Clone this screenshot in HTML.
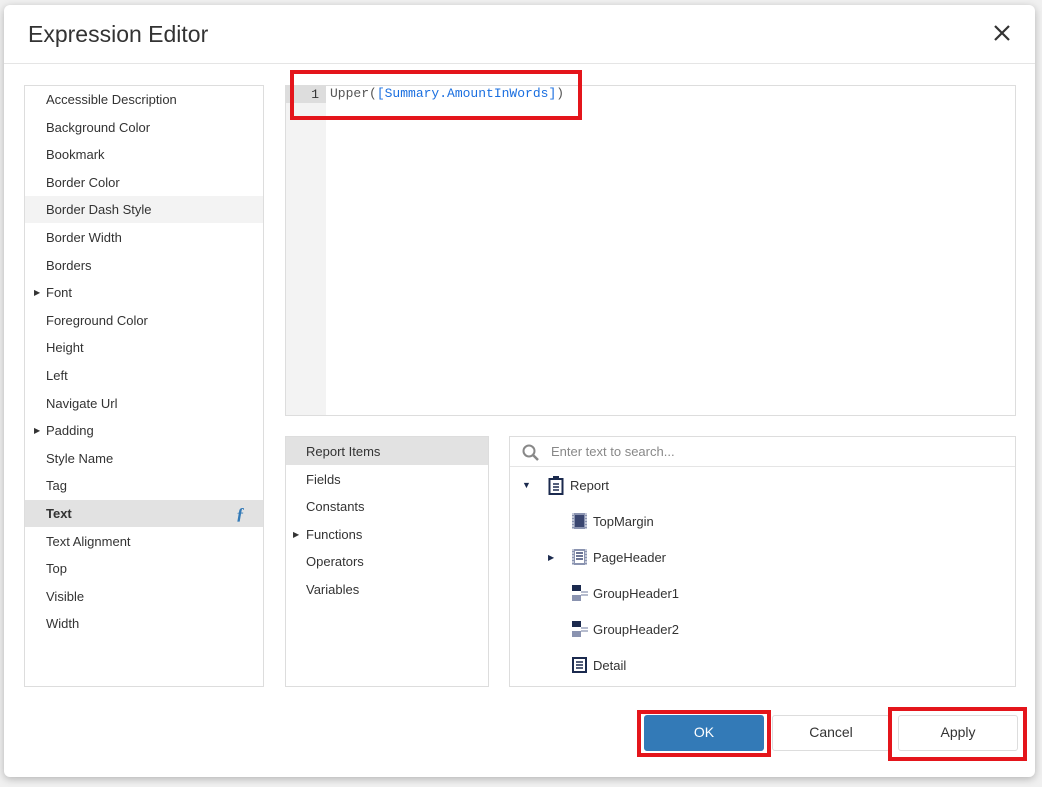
<!DOCTYPE html>
<html><head><style>
body{margin:0;width:1042px;height:787px;background:#f0f0f0;font-family:"Liberation Sans",sans-serif;position:relative;overflow:hidden;font-size:13px;color:#333}
.a{position:absolute}
.dlg{left:4px;top:5px;width:1031px;height:772px;background:#fff;border-radius:6px;box-shadow:0 2px 8px rgba(0,0,0,.25)}
.box{border:1px solid #ddd;background:#fff;box-sizing:border-box}
.li{position:absolute;left:0;width:238px;height:27px;line-height:27px;padding-left:21px;box-sizing:border-box}
.tri{position:absolute;left:9px;top:0;font-size:8px}
.red{border:4px solid #e4151b;box-sizing:border-box}
.btn{border:1px solid #ddd;border-radius:3px;box-sizing:border-box;text-align:center;line-height:33px;font-size:14px;background:#fff}
.ti{position:absolute;left:83px;height:20px;line-height:20px}
</style></head><body>
<div class="a dlg"></div>
<div class="a" style="left:28px;top:21px;font-size:23px;color:#333">Expression Editor</div>
<svg class="a" style="left:993px;top:24px" width="18" height="18"><path d="M2 2L16 16M16 2L2 16" stroke="#333" stroke-width="2.2"/></svg>
<div class="a" style="left:4px;top:63px;width:1031px;height:1px;background:#e5e5e5"></div>

<div class="a box" style="left:24px;top:85px;width:240px;height:602px">
<div class="li" style="top:110px;background:#f3f3f3"></div>
<div class="li" style="top:414px;background:#e2e2e2"></div>
<div class="li" style="top:0">Accessible Description</div>
<div class="li" style="top:27.6px">Background Color</div>
<div class="li" style="top:55.2px">Bookmark</div>
<div class="li" style="top:82.8px">Border Color</div>
<div class="li" style="top:110.4px">Border Dash Style</div>
<div class="li" style="top:138px">Border Width</div>
<div class="li" style="top:165.6px">Borders</div>
<div class="li" style="top:193.2px"><span class="tri">▶</span>Font</div>
<div class="li" style="top:220.8px">Foreground Color</div>
<div class="li" style="top:248.4px">Height</div>
<div class="li" style="top:276px">Left</div>
<div class="li" style="top:303.6px">Navigate Url</div>
<div class="li" style="top:331.2px"><span class="tri">▶</span>Padding</div>
<div class="li" style="top:358.8px">Style Name</div>
<div class="li" style="top:386.4px">Tag</div>
<div class="li" style="top:414px;font-weight:bold">Text<span style="position:absolute;left:211px;color:#337ab7;font-style:italic;font-family:'Liberation Serif',serif;font-size:17px">ƒ</span></div>
<div class="li" style="top:441.6px">Text Alignment</div>
<div class="li" style="top:469.2px">Top</div>
<div class="li" style="top:496.8px">Visible</div>
<div class="li" style="top:524.4px">Width</div>
</div>

<div class="a box" style="left:285px;top:85px;width:731px;height:331px">
<div class="a" style="left:0;top:0;width:40px;height:329px;background:#f3f3f3"></div>
<div class="a" style="left:0;top:0;width:40px;height:17px;background:#ddd;text-align:right;font-family:'Liberation Mono',monospace;font-size:13px;line-height:17px;box-sizing:border-box;padding-right:7px">1</div>
<div class="a" style="left:44px;top:-1px;line-height:17px;font-family:'Liberation Mono',monospace;font-size:13px;color:#555">Upper(<span style="color:#1a6fe0">[Summary.AmountInWords]</span>)</div>
</div>
<div class="a red" style="left:290px;top:70px;width:292px;height:50px"></div>

<div class="a box" style="left:285px;top:436px;width:204px;height:251px">
<div class="a" style="left:0;top:0;width:202px;height:28px;background:#e2e2e2"></div>
<div class="a" style="left:20px;top:1px;line-height:28px">Report Items</div>
<div class="a" style="left:20px;top:29px;line-height:28px">Fields</div>
<div class="a" style="left:20px;top:56px;line-height:28px">Constants</div>
<div class="a" style="left:20px;top:84px;line-height:28px"><span style="position:absolute;left:-13px;font-size:8px">▶</span>Functions</div>
<div class="a" style="left:20px;top:111px;line-height:28px">Operators</div>
<div class="a" style="left:20px;top:139px;line-height:28px">Variables</div>
</div>

<div class="a box" style="left:509px;top:436px;width:507px;height:251px">
<svg class="a" style="left:12px;top:7px" width="18" height="18"><circle cx="7" cy="7" r="5.5" stroke="#888" stroke-width="2" fill="none"/><path d="M11 11L16 16" stroke="#888" stroke-width="2.5"/></svg>
<div class="a" style="left:41px;top:6px;color:#888;line-height:18px">Enter text to search...</div>
<div class="a" style="left:0;top:29px;width:505px;height:1px;background:#e5e5e5"></div>
<div class="a" style="left:12px;top:43px;font-size:9px;color:#1b2a4e">▼</div>
<svg class="a" style="left:38px;top:39px" width="16" height="19"><rect x="1.5" y="3" width="13" height="15" fill="none" stroke="#1b2a4e" stroke-width="2"/><rect x="5" y="0" width="6" height="4" fill="#1b2a4e"/><path d="M5 8h6M5 11h6M5 14h6" stroke="#1b2a4e" stroke-width="1.6"/></svg>
<div class="a" style="left:60px;top:39px;line-height:20px">Report</div>
<svg class="a" style="left:62px;top:76px" width="15" height="16"><rect x="0" y="0" width="15" height="16" fill="#8a93b0"/><rect x="3" y="2" width="9" height="12" fill="#3a4670"/><path d="M1 0v16M14 0v16" stroke="#fff" stroke-dasharray="2 1"/></svg>
<div class="ti" style="top:75px">TopMargin</div>
<div class="a" style="left:38px;top:116px;font-size:8px;color:#1b2a4e">▶</div>
<svg class="a" style="left:62px;top:112px" width="15" height="16"><rect x="0" y="0" width="15" height="16" fill="#8a93b0"/><rect x="3" y="2" width="9" height="12" fill="#fff"/><path d="M4 4h7M4 7h7M4 10h7" stroke="#3a4670" stroke-width="1.5"/><path d="M1 0v16M14 0v16" stroke="#fff" stroke-dasharray="2 1"/></svg>
<div class="ti" style="top:111px">PageHeader</div>
<svg class="a" style="left:62px;top:148px" width="16" height="16"><rect x="0" y="0" width="9" height="6" fill="#1b2a4e"/><rect x="0" y="10" width="9" height="6" fill="#8a93b0"/><path d="M9 7h7M9 10h7" stroke="#8a93b0" stroke-width="1.3"/></svg>
<div class="ti" style="top:147px">GroupHeader1</div>
<svg class="a" style="left:62px;top:184px" width="16" height="16"><rect x="0" y="0" width="9" height="6" fill="#1b2a4e"/><rect x="0" y="10" width="9" height="6" fill="#8a93b0"/><path d="M9 7h7M9 10h7" stroke="#8a93b0" stroke-width="1.3"/></svg>
<div class="ti" style="top:183px">GroupHeader2</div>
<svg class="a" style="left:62px;top:220px" width="15" height="16"><rect x="1" y="1" width="13" height="14" fill="none" stroke="#1b2a4e" stroke-width="2"/><path d="M4 5h7M4 8h7M4 11h7" stroke="#1b2a4e" stroke-width="1.5"/></svg>
<div class="ti" style="top:219px">Detail</div>
</div>

<div class="a btn" style="left:644px;top:715px;width:120px;height:36px;background:#337ab7;color:#fff;border-color:#337ab7">OK</div>
<div class="a red" style="left:637px;top:710px;width:134px;height:47px"></div>
<div class="a btn" style="left:772px;top:715px;width:118px;height:36px">Cancel</div>
<div class="a btn" style="left:898px;top:715px;width:120px;height:36px">Apply</div>
<div class="a red" style="left:888px;top:707px;width:139px;height:54px"></div>
</body></html>
